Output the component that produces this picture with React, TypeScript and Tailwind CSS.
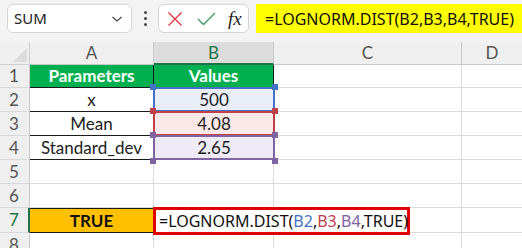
const cellFont = { fontFamily: "Lato, 'Liberation Sans', sans-serif" };

const rows = [
  { n: "1", h: "h-[23px]" },
  { n: "2", h: "h-[24px]" },
  { n: "3", h: "h-[24px]" },
  { n: "4", h: "h-[24px]" },
  { n: "5", h: "h-[24px]" },
  { n: "6", h: "h-[24px]" },
  { n: "7", h: "h-[25px]" },
  { n: "8", h: "h-[24px]" },
];

const Handle = ({ className }: { className: string }) => (
  <span className={`absolute w-[6px] h-[6px] z-10 ${className}`} />
);

export default function App() {
  return (
    <div className="w-[522px] h-[248px] overflow-hidden bg-white text-[#222]" style={{ fontFamily: "'Noto Sans', 'Open Sans', sans-serif" }}>
      {/* Formula bar strip */}
      <div className="h-[42px] bg-[#f3f3f3] flex items-start pt-[4px] pl-[7px]">
        <div className="w-[125px] h-[29px] bg-white border border-[#d6d6d6] rounded-[6px] flex items-center justify-between pl-[6px] pr-[8px]">
          <span className="text-[15px] text-[#222]">SUM</span>
          <svg width="12" height="8" viewBox="0 0 12 8" fill="none" stroke="#444" strokeWidth="1.2">
            <path d="M1.5 2 L6 6 L10.5 2" />
          </svg>
        </div>
        <div className="w-[26px] h-[29px] flex flex-col items-center justify-center gap-[3px]">
          <span className="w-[3px] h-[3px] bg-[#444] rounded-full" />
          <span className="w-[3px] h-[3px] bg-[#444] rounded-full" />
          <span className="w-[3px] h-[3px] bg-[#444] rounded-full" />
        </div>
        <div className="w-[91px] h-[29px] bg-white border border-[#d6d6d6] rounded-[6px] flex items-center pl-[8px] gap-[14px]">
          <svg width="16" height="16" viewBox="0 0 16 16" fill="none" stroke="#e0343c" strokeWidth="1.3">
            <path d="M1.5 1.5 L14.5 14.5 M14.5 1.5 L1.5 14.5" />
          </svg>
          <svg width="19" height="14" viewBox="0 0 19 14" fill="none" stroke="#3f9a5c" strokeWidth="1.3">
            <path d="M1 7 L6.5 12.5 L18 1" />
          </svg>
          <span className="text-[19px] italic leading-none -ml-[2px]" style={{ fontFamily: "'Liberation Serif', serif" }}>fx</span>
        </div>
        <div className="ml-[7px] flex-1 h-[29px] bg-[#ffff00] flex items-center pl-[9px] text-[16px] text-[#111]">
          =LOGNORM.DIST(B2,B3,B4,TRUE)
        </div>
      </div>

      {/* Grid */}
      <div className="grid grid-cols-[30px_124px_120px_188px_60px]" style={cellFont}>
        {/* header row */}
        <div className="h-[23px] bg-[#efefef] border-r border-b border-[#d0d0d0] relative">
          <svg className="absolute right-[2px] bottom-[2px]" width="14" height="14" viewBox="0 0 14 14">
            <path d="M14 0 L14 14 L0 14 Z" fill="#dcdcdc" />
          </svg>
        </div>
        <div className="h-[23px] bg-[#efefef] border-r border-b border-[#c8c8c8] flex items-center justify-center text-[17px] text-[#555]">A</div>
        <div className="h-[23px] bg-[#dcdcdc] border-r border-b-2 border-[#c8c8c8] border-b-[#217346] flex items-center justify-center text-[17px] text-[#217346]">B</div>
        <div className="h-[23px] bg-[#efefef] border-r border-b border-[#c8c8c8] flex items-center justify-center text-[17px] text-[#555]">C</div>
        <div className="h-[23px] bg-[#efefef] border-b border-[#c8c8c8] flex items-center justify-center text-[17px] text-[#555]">D</div>

        {rows.map((r) => (
          <Row key={r.n} n={r.n} h={r.h} />
        ))}
      </div>
    </div>
  );
}

function RowHead({ n, h }: { n: string; h: string }) {
  const sel = n === "7";
  return (
    <div
      className={`${h} bg-[#efefef] border-b border-[#d8d8d8] flex items-center pl-[9px] text-[17px] ${
        sel ? "border-r-2 border-r-[#217346] text-[#217346]" : "border-r border-r-[#c8c8c8] text-[#555]"
      }`}
    >
      {n}
    </div>
  );
}

function Row({ n, h }: { n: string; h: string }) {
  const plain = `${h} border-r border-b border-[#dadada]`;
  let a: React.ReactNode = <div className={plain} />;
  let b: React.ReactNode = <div className={plain} />;

  if (n === "1") {
    a = <div className={`${h} bg-[#00b050] border-r border-b border-[#1a1a1a] flex items-center justify-center text-white font-bold text-[17px]`}>Parameters</div>;
    b = <div className={`${h} bg-[#00b050] border-r border-b border-[#1a1a1a] flex items-center justify-center text-white font-bold text-[17px]`}>Values</div>;
  } else if (n === "2" || n === "3" || n === "4") {
    const label = n === "2" ? "x" : n === "3" ? "Mean" : "Standard_dev";
    const val = n === "2" ? "500" : n === "3" ? "4.08" : "2.65";
    const bg = n === "2" ? "bg-[#e9eef8]" : n === "3" ? "bg-[#fbe9e9]" : "bg-[#efebf6]";
    const bc = n === "2" ? "border-[#4472c4]" : n === "3" ? "border-[#c0404a]" : "border-[#8064a2]";
    const hc = n === "2" ? "bg-[#4472c4]" : n === "3" ? "bg-[#c0404a]" : "bg-[#8064a2]";
    a = <div className={`${h} border-r border-b border-[#1a1a1a] flex items-center justify-center text-[17px]`}>{label}</div>;
    b = (
      <div className={`${h} relative ${bg} flex items-center justify-center text-[17px]`}>
        <div className={`absolute -left-[1px] -top-[1px] -right-[1px] bottom-0 border-2 ${bc}`} />
        <Handle className={`${hc} -left-[4px] -top-[4px]`} />
        <Handle className={`${hc} -right-[4px] -top-[4px]`} />
        {n === "4" && <Handle className={`${hc} -left-[4px] -bottom-[4px]`} />}
        {n === "4" && <Handle className={`${hc} -right-[4px] -bottom-[4px]`} />}
        <span className="relative">{val}</span>
      </div>
    );
  } else if (n === "7") {
    a = <div className={`${h} bg-[#ffc000] border-y border-r border-[#1a1a1a] flex items-center justify-center font-bold text-[17px] text-[#111]`}>TRUE</div>;
    b = (
      <div className={`${h} relative border-r border-b border-[#dadada]`}>
        <div className="absolute -left-[1px] -top-[1px] w-[257px] h-[28px] bg-white border-[3px] border-[#e00000] z-10 flex items-center pl-[3px] text-[16px] text-[#111] whitespace-nowrap" style={{ fontFamily: "'Noto Sans', 'Open Sans', sans-serif" }}>
          =LOGNORM.DIST(<span className="text-[#4472c4]">B2</span>,<span className="text-[#c0404a]">B3</span>,<span className="text-[#8064a2]">B4</span>,TRUE)
        </div>
      </div>
    );
  }

  return (
    <>
      <RowHead n={n} h={h} />
      {a}
      {b}
      <div className={plain} />
      <div className={`${h} border-b border-[#dadada]`} />
    </>
  );
}
